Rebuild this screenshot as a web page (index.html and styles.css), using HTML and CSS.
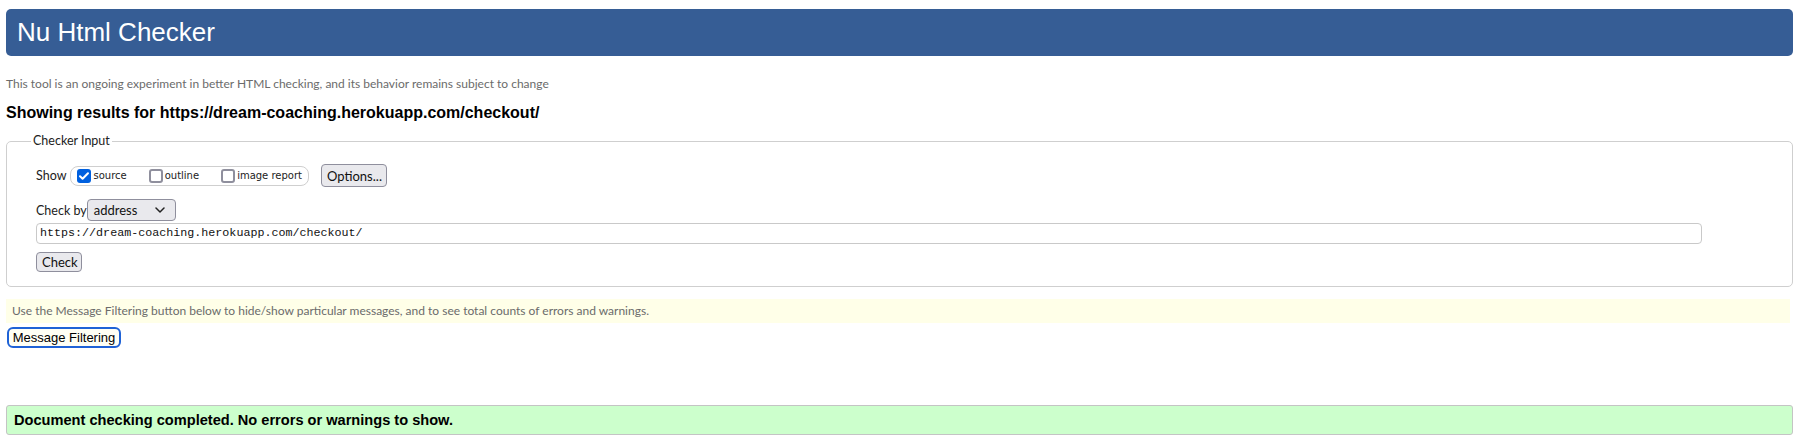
FILE: index.html
```html
<!DOCTYPE html>
<html lang="en">
<head>
<meta charset="utf-8">
<title>Nu Html Checker</title>
<link rel="stylesheet" href="styles.css">
</head>
<body>
<div class="page">
  <h1 class="banner">Nu Html Checker</h1>
  <p class="intro">This tool is an ongoing experiment in better HTML checking, and its behavior remains subject to change</p>
  <h2 class="results">Showing results for https://dream-coaching.herokuapp.com/checkout/</h2>

  <fieldset class="input-box">
    <legend class="legend">Checker Input</legend>
    <div class="row row-show">
      <span class="label">Show</span>
      <span class="opts">
        <label class="opt"><span class="cb cb-on"><svg viewBox="0 0 14 14" width="14" height="14"><path d="M3 7.2l2.6 2.6L11 4.2" fill="none" stroke="#fff" stroke-width="2" stroke-linecap="round" stroke-linejoin="round"/></svg></span><span class="opt-text">source</span></label>
        <label class="opt"><span class="cb"></span><span class="opt-text">outline</span></label>
        <label class="opt"><span class="cb"></span><span class="opt-text">image report</span></label>
      </span>
      <button class="btn btn-options" type="button">Options...</button>
    </div>
    <div class="row row-by">
      <span class="label">Check by</span>
      <span class="select">address<svg class="chev" viewBox="0 0 10 6" width="10" height="6"><path d="M1 1l4 4 4-4" fill="none" stroke="#222" stroke-width="1.5" stroke-linecap="round" stroke-linejoin="round"/></svg></span>
    </div>
    <div class="url">https://dream-coaching.herokuapp.com/checkout/</div>
    <div class="row row-check">
      <button class="btn btn-check" type="button">Check</button>
    </div>
  </fieldset>

  <p class="note">Use the Message Filtering button below to hide/show particular messages, and to see total counts of errors and warnings.</p>
  <button class="filter-btn" type="button">Message Filtering</button>

  <p class="success">Document checking completed. No errors or warnings to show.</p>
</div>
</body>
</html>
```

FILE: styles.css
```css
html, body {
  margin: 0;
  padding: 0;
  background: #fff;
}

.page {
  padding: 9px 11px 0 6px;
  font-family: Lato, "Open Sans", sans-serif;
  color: #000;
}

.banner {
  margin: 0;
  height: 47px;
  line-height: 47px;
  padding: 0 11px;
  background: #365d95;
  color: #fff;
  border-radius: 5px;
  font-family: "Liberation Sans", Arial, sans-serif;
  font-size: 26px;
  font-weight: normal;
}

.intro {
  margin: 20px 0 0 0;
  line-height: 16px;
  font-size: 12px;
  color: #6b6b6b;
}

.results {
  margin: 11px 0 0 0;
  line-height: 20px;
  font-family: "Liberation Sans", Arial, sans-serif;
  font-size: 16px;
  font-weight: bold;
}

.input-box {
  margin: 10px 0 0 0;
  padding: 15px 90px 14px 29px;
  border: 1px solid #cfcfcf;
  border-radius: 5px;
  min-inline-size: 0;
}

.legend {
  margin-left: -5px;
  padding: 0 2px;
  font-size: 12.5px;
  line-height: 16px;
  color: #222;
}

.row {
  display: flex;
  align-items: center;
}

.label {
  font-size: 12.5px;
  color: #222;
}

.row-show {
  height: 23px;
}

.opts {
  display: flex;
  align-items: center;
  height: 18px;
  margin-left: 4px;
  padding: 0 6px 0 6px;
  border: 1px solid #cfcfcf;
  border-radius: 8px;
}

.opt {
  display: flex;
  align-items: center;
  margin-right: 22px;
}

.opt:last-child {
  margin-right: 0;
}

.cb {
  box-sizing: border-box;
  width: 14px;
  height: 14px;
  border: 2px solid #8f8f9d;
  border-radius: 3px;
  background: #fff;
  display: flex;
  align-items: center;
  justify-content: center;
}

.cb-on {
  border: none;
  background: #0060df;
}

.cb svg {
  display: block;
}

.opt-text {
  margin-left: 2px;
  font-family: "DejaVu Sans", Verdana, sans-serif;
  font-size: 10px;
  color: #222;
}

.btn {
  box-sizing: border-box;
  font-family: Lato, "Open Sans", sans-serif;
  font-size: 13px;
  color: #111;
  background: #e9e9ed;
  border: 1px solid #8f8f9d;
  border-radius: 4px;
  padding: 0 5px;
  margin: 0;
}

.btn-options {
  margin-left: 12px;
  height: 23px;
  width: 66px;
}

.row-by {
  margin-top: 12px;
  height: 22px;
}

.select {
  position: relative;
  box-sizing: border-box;
  display: flex;
  align-items: center;
  margin-left: 0;
  width: 89px;
  height: 22px;
  padding: 0 0 0 6px;
  font-size: 13px;
  color: #111;
  background: #e9e9ed;
  border: 1px solid #8f8f9d;
  border-radius: 4px;
}

.chev {
  position: absolute;
  right: 10px;
  top: 7px;
}

.url {
  box-sizing: border-box;
  margin-top: 2px;
  height: 21px;
  line-height: 19px;
  padding: 0 4px 0 3px;
  border: 1px solid #c9c9c9;
  border-radius: 4px;
  font-family: "Liberation Mono", "DejaVu Sans Mono", monospace;
  font-size: 11.7px;
  color: #111;
  background: #fff;
}

.row-check {
  margin-top: 8px;
}

.btn-check {
  height: 20px;
  width: 46px;
}

.note {
  margin: 12px 3px 0 0;
  height: 24px;
  line-height: 24px;
  padding: 0 6px;
  background: #ffffe8;
  font-size: 12px;
  color: #6b6b6b;
}

.filter-btn {
  display: block;
  box-sizing: border-box;
  margin: 4px 0 0 1px;
  width: 114px;
  height: 21px;
  padding: 0;
  font-family: "Liberation Sans", Arial, sans-serif;
  font-size: 13px;
  color: #000;
  background: #fffff4;
  border: 2px solid #1f62d6;
  border-radius: 6px;
}

.success {
  margin: 57px 0 0 0;
  box-sizing: border-box;
  height: 30px;
  line-height: 28px;
  padding: 0 7px;
  background: #ccffcc;
  border: 1px solid #c4c4c4;
  border-radius: 3px;
  font-family: "Liberation Sans", Arial, sans-serif;
  font-size: 14.6px;
  font-weight: bold;
}
```
